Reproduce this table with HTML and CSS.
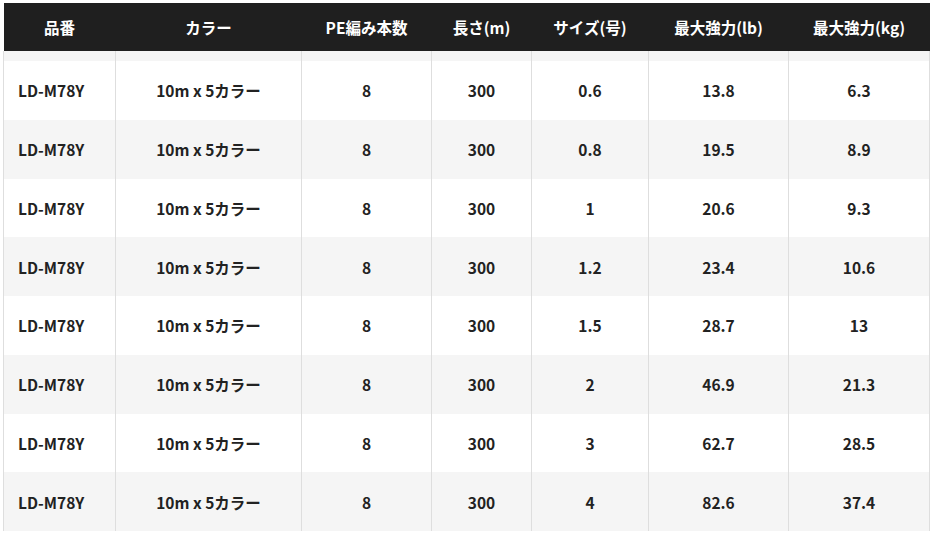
FILE: index.html
```html
<!DOCTYPE html>
<html lang="ja">
<head>
<meta charset="utf-8">
<link rel="stylesheet" href="styles.css">
</head>
<body>
<table class="spec">
  <colgroup>
    <col class="c1"><col class="c2"><col class="c3"><col class="c4"><col class="c5"><col class="c6"><col class="c7">
  </colgroup>
  <thead>
    <tr>
      <th>品番</th><th>カラー</th><th>PE編み本数</th><th>長さ(m)</th><th>サイズ(号)</th><th>最大強力(lb)</th><th>最大強力(kg)</th>
    </tr>
  </thead>
  <tbody>
    <tr class="band"><td></td><td></td><td></td><td></td><td></td><td></td><td></td></tr>
    <tr><td class="code">LD-M78Y</td><td>10m x 5カラー</td><td>8</td><td>300</td><td>0.6</td><td>13.8</td><td>6.3</td></tr>
    <tr class="alt"><td class="code">LD-M78Y</td><td>10m x 5カラー</td><td>8</td><td>300</td><td>0.8</td><td>19.5</td><td>8.9</td></tr>
    <tr><td class="code">LD-M78Y</td><td>10m x 5カラー</td><td>8</td><td>300</td><td>1</td><td>20.6</td><td>9.3</td></tr>
    <tr class="alt"><td class="code">LD-M78Y</td><td>10m x 5カラー</td><td>8</td><td>300</td><td>1.2</td><td>23.4</td><td>10.6</td></tr>
    <tr><td class="code">LD-M78Y</td><td>10m x 5カラー</td><td>8</td><td>300</td><td>1.5</td><td>28.7</td><td>13</td></tr>
    <tr class="alt"><td class="code">LD-M78Y</td><td>10m x 5カラー</td><td>8</td><td>300</td><td>2</td><td>46.9</td><td>21.3</td></tr>
    <tr><td class="code">LD-M78Y</td><td>10m x 5カラー</td><td>8</td><td>300</td><td>3</td><td>62.7</td><td>28.5</td></tr>
    <tr class="alt"><td class="code">LD-M78Y</td><td>10m x 5カラー</td><td>8</td><td>300</td><td>4</td><td>82.6</td><td>37.4</td></tr>
  </tbody>
</table>
</body>
</html>
```
FILE: styles.css
```css
html, body {
  margin: 0;
  background: #fff;
}
body {
  padding: 3px 0 0 3px;
  font-family: "Noto Sans CJK JP", "Noto Sans", sans-serif;
  color: #222;
}
.spec {
  border-collapse: collapse;
  table-layout: fixed;
  width: 926px;
}
.c1 { width: 112px; }
.c2 { width: 186px; }
.c3 { width: 130px; }
.c4 { width: 100px; }
.c5 { width: 117px; }
.c6 { width: 140px; }
.c7 { width: 141px; }
.spec th {
  background: #1f1f1f;
  color: #fff;
  font-weight: 700;
  font-size: 15.5px;
  height: 48px;
  padding: 0;
  text-align: center;
  vertical-align: middle;
}
.spec td {
  border-left: 1px solid #dedede;
  border-right: 1px solid #dedede;
  font-weight: 700;
  font-size: 15.5px;
  text-align: center;
  vertical-align: middle;
  height: 58.75px;
  padding: 0;
}
.spec tr.band td {
  height: 10px;
  background: #f5f5f5;
}
.spec tr.alt td {
  background: #f5f5f5;
}
.spec td.code {
  text-align: left;
  padding-left: 14px;
}
```
